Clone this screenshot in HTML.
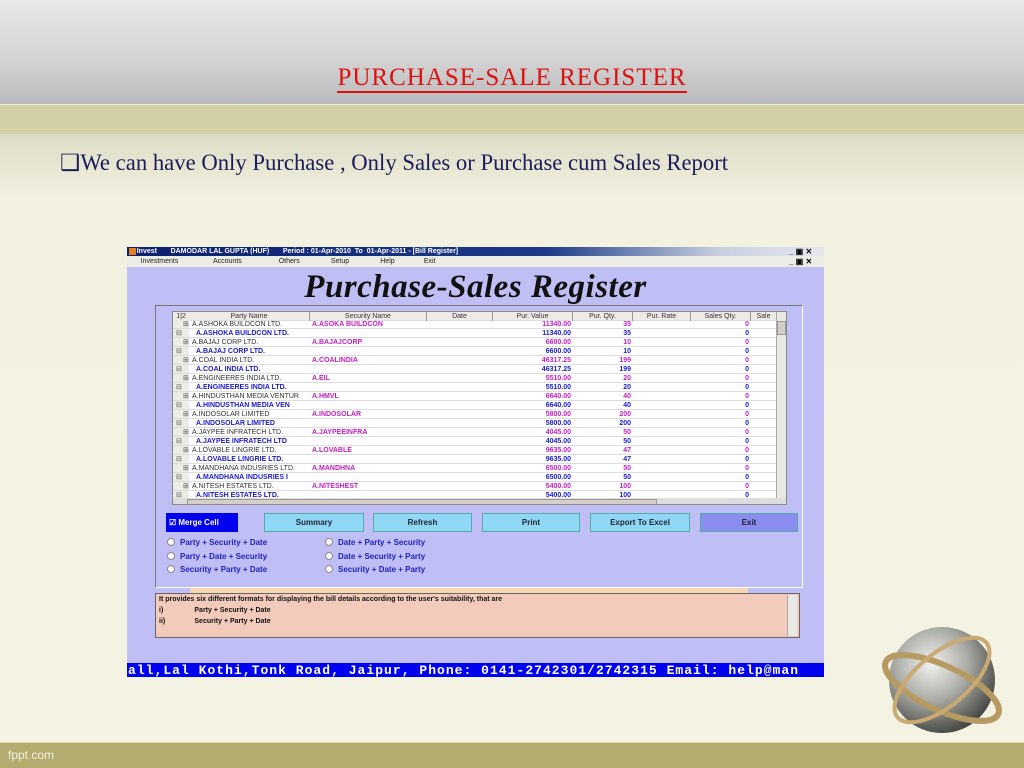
<!DOCTYPE html>
<html><head><meta charset="utf-8"><style>
*{margin:0;padding:0;box-sizing:border-box}
body{width:1024px;height:768px;position:relative;overflow:hidden;font-family:"Liberation Sans",sans-serif;background:linear-gradient(#dcdcc6 134px,#f3f1e0 200px,#f4f2e2 740px)}
.a{position:absolute}
.top{left:0;top:0;width:1024px;height:104px;background:linear-gradient(#e8e8e8,#d2d2d2 60%,#b9babc)}
.band{left:0;top:104px;width:1024px;height:30px;background:#d4d0a6;border-top:1px solid #eeeedd}
.bot{left:0;top:742px;width:1024px;height:26px;background:#b3ab6f;border-top:1px solid #ddd8b0}
h1{position:absolute;left:0;width:1024px;top:64px;text-align:center;font-family:"Liberation Serif",serif;font-size:25px;font-weight:normal;color:#e01010;letter-spacing:1px}
h1 span{border-bottom:2px solid #e01010}
.sub{left:60px;top:150px;font-family:"Liberation Serif",serif;font-size:22.7px;color:#1c1c5a;white-space:nowrap}
.win{left:127px;top:247px;width:697px;height:430px;background:#bfbff6}
.tb{left:0;top:0;width:697px;height:9px;background:linear-gradient(90deg,#0c2070,#1c3a88 60%,#c8cfe0 85%,#e6e6ee);color:#fff;font-size:7px;font-weight:bold;line-height:9px;white-space:pre}
.mb{left:0;top:9px;width:697px;height:11px;background:#ecebe6;font-size:7px;line-height:11px;color:#222;white-space:pre}
.ttl{left:0;width:697px;top:22px;text-align:center;font-family:"Liberation Serif",serif;font-style:italic;font-weight:bold;font-size:33px;color:#111;letter-spacing:0.5px}
.panel{left:28px;top:58px;width:648px;height:283px;border:1px solid #777;border-right-color:#fff;border-bottom-color:#fff}
.grid{left:45px;top:64px;width:615px;height:194px;background:#fff;border:1px solid #888;overflow:hidden}
.row{position:absolute;left:0;height:9px;width:603px;font-size:7px;line-height:9px;white-space:nowrap;border-bottom:1px solid #ddd}
.row div{position:absolute;top:0;overflow:hidden}
.hd{background:#ecebe6;color:#333;text-align:center}
.e{left:10px;color:#555}.c{left:3px;color:#555}
.p{left:19px;width:118px;color:#333}.s{left:139px;color:#c020c0;font-weight:bold}
.v{left:320px;width:78px;text-align:right;font-weight:bold}
.q{left:400px;width:58px;text-align:right;font-weight:bold}
.z{left:518px;width:58px;text-align:right;font-weight:bold}
.m .v,.m .q,.m .z{color:#c020c0}
.b .v,.b .q,.b .z{color:#1a1ac8}
.n{left:23px;width:114px;color:#1a1ac8;font-weight:bold}
.btn{position:absolute;top:266px;height:19px;background:#8ed8f6;border:1px solid #5aa;font-size:8px;font-weight:bold;color:#223;text-align:center;line-height:17px}
.rad{position:absolute;font-size:8px;color:#2020c0;font-weight:bold;white-space:nowrap}
.rad:before{content:"";display:inline-block;width:6px;height:6px;border-radius:50%;background:#fff;border:1px solid #888;margin-right:5px;vertical-align:-1px}
.note{left:28px;top:346px;width:645px;height:45px;background:#f2cbbd;border:1px solid #666;font-size:7px;font-weight:bold;color:#111;line-height:11px;padding-left:3px}
</style></head><body>
<div class="a top"></div><div class="a band"></div><div class="a bot"></div>
<h1><span>PURCHASE-SALE REGISTER</span></h1>
<div class="a sub">❑We can have Only Purchase , Only Sales or Purchase cum Sales Report</div>
<div class="a" style="left:8px;top:748px;color:#f4f2e0;font-size:12px">fppt.com</div>
<svg class="a" style="left:875px;top:620px" width="135" height="130" viewBox="0 0 135 130">
<defs><radialGradient id="g" cx="0.4" cy="0.35" r="0.7"><stop offset="0" stop-color="#f2f2f0"/><stop offset="0.5" stop-color="#a9a9a4"/><stop offset="1" stop-color="#3e3f3a"/></radialGradient></defs>
<circle cx="67" cy="60" r="53" fill="url(#g)"/>
<ellipse cx="67" cy="68" rx="62" ry="22" fill="none" stroke="#b59a62" stroke-width="6" transform="rotate(25 67 68)"/>
<ellipse cx="67" cy="60" rx="58" ry="26" fill="none" stroke="#c8aa72" stroke-width="4" transform="rotate(-40 67 60)"/>
</svg>
<div class="a win">
<div class="a tb">     Invest       DAMODAR LAL GUPTA (HUF)       Period : 01-Apr-2010  To  01-Apr-2011 - [Bill Register]</div>
<div class="a" style="left:2px;top:1px;width:7px;height:7px;background:#e08020"></div>
<div class="a mb">       Investments                  Accounts                   Others                Setup                Help               Exit</div>
<div class="a" style="left:662px;top:0;font-size:8px;color:#000;font-weight:bold">_ ▣ ✕</div>
<div class="a" style="left:662px;top:10px;font-size:8px;color:#000;font-weight:bold">_ ▣ ✕</div>
<div class="a ttl">Purchase-Sales Register</div>
<div class="a panel"></div>
<div class="a grid">
<div class="row hd" style="top:0">
<div style="left:0;width:16px">1|2</div><div style="left:16px;width:121px;border-right:1px solid #999">Party Name</div><div style="left:137px;width:117px;border-right:1px solid #999">Security Name</div><div style="left:254px;width:66px;border-right:1px solid #999">Date</div><div style="left:320px;width:80px;border-right:1px solid #999">Pur. Value</div><div style="left:400px;width:60px;border-right:1px solid #999">Pur. Qty.</div><div style="left:460px;width:58px;border-right:1px solid #999">Pur. Rate</div><div style="left:518px;width:60px;border-right:1px solid #999">Sales Qty.</div><div style="left:578px;width:25px">Sale</div></div>
<div class="a" style="left:0;top:8px;width:16px;height:186px;background:#ecebe6"></div>
<div class="row m" style="top:8px"><div class="e">⊞</div><div class="p">A.ASHOKA BUILDCON LTD.</div><div class="s">A.ASOKA BUILDCON</div><div class="v">11340.00</div><div class="q">35</div><div class="z">0</div></div>
<div class="row b" style="top:17px"><div class="c">⊟</div><div class="n">A.ASHOKA BUILDCON LTD.</div><div class="v">11340.00</div><div class="q">35</div><div class="z">0</div></div>
<div class="row m" style="top:26px"><div class="e">⊞</div><div class="p">A.BAJAJ CORP LTD.</div><div class="s">A.BAJAJCORP</div><div class="v">6600.00</div><div class="q">10</div><div class="z">0</div></div>
<div class="row b" style="top:35px"><div class="c">⊟</div><div class="n">A.BAJAJ CORP LTD.</div><div class="v">6600.00</div><div class="q">10</div><div class="z">0</div></div>
<div class="row m" style="top:44px"><div class="e">⊞</div><div class="p">A.COAL INDIA LTD.</div><div class="s">A.COALINDIA</div><div class="v">46317.25</div><div class="q">199</div><div class="z">0</div></div>
<div class="row b" style="top:53px"><div class="c">⊟</div><div class="n">A.COAL INDIA LTD.</div><div class="v">46317.25</div><div class="q">199</div><div class="z">0</div></div>
<div class="row m" style="top:62px"><div class="e">⊞</div><div class="p">A.ENGINEERES INDIA LTD.</div><div class="s">A.EIL</div><div class="v">5510.00</div><div class="q">20</div><div class="z">0</div></div>
<div class="row b" style="top:71px"><div class="c">⊟</div><div class="n">A.ENGINEERES INDIA LTD.</div><div class="v">5510.00</div><div class="q">20</div><div class="z">0</div></div>
<div class="row m" style="top:80px"><div class="e">⊞</div><div class="p">A.HINDUSTHAN MEDIA VENTUR</div><div class="s">A.HMVL</div><div class="v">6640.00</div><div class="q">40</div><div class="z">0</div></div>
<div class="row b" style="top:89px"><div class="c">⊟</div><div class="n">A.HINDUSTHAN MEDIA VEN</div><div class="v">6640.00</div><div class="q">40</div><div class="z">0</div></div>
<div class="row m" style="top:98px"><div class="e">⊞</div><div class="p">A.INDOSOLAR LIMITED</div><div class="s">A.INDOSOLAR</div><div class="v">5800.00</div><div class="q">200</div><div class="z">0</div></div>
<div class="row b" style="top:107px"><div class="c">⊟</div><div class="n">A.INDOSOLAR LIMITED</div><div class="v">5800.00</div><div class="q">200</div><div class="z">0</div></div>
<div class="row m" style="top:116px"><div class="e">⊞</div><div class="p">A.JAYPEE INFRATECH LTD.</div><div class="s">A.JAYPEEINFRA</div><div class="v">4045.00</div><div class="q">50</div><div class="z">0</div></div>
<div class="row b" style="top:125px"><div class="c">⊟</div><div class="n">A.JAYPEE INFRATECH LTD</div><div class="v">4045.00</div><div class="q">50</div><div class="z">0</div></div>
<div class="row m" style="top:134px"><div class="e">⊞</div><div class="p">A.LOVABLE LINGRIE LTD.</div><div class="s">A.LOVABLE</div><div class="v">9635.00</div><div class="q">47</div><div class="z">0</div></div>
<div class="row b" style="top:143px"><div class="c">⊟</div><div class="n">A.LOVABLE LINGRIE LTD.</div><div class="v">9635.00</div><div class="q">47</div><div class="z">0</div></div>
<div class="row m" style="top:152px"><div class="e">⊞</div><div class="p">A.MANDHANA INDUSRIES LTD.</div><div class="s">A.MANDHNA</div><div class="v">6500.00</div><div class="q">50</div><div class="z">0</div></div>
<div class="row b" style="top:161px"><div class="c">⊟</div><div class="n">A.MANDHANA INDUSRIES I</div><div class="v">6500.00</div><div class="q">50</div><div class="z">0</div></div>
<div class="row m" style="top:170px"><div class="e">⊞</div><div class="p">A.NITESH ESTATES LTD.</div><div class="s">A.NITESHEST</div><div class="v">5400.00</div><div class="q">100</div><div class="z">0</div></div>
<div class="row b" style="top:179px"><div class="c">⊟</div><div class="n">A.NITESH ESTATES LTD.</div><div class="v">5400.00</div><div class="q">100</div><div class="z">0</div></div>
<div class="a" style="left:603px;top:0;width:11px;height:186px;background:#e8e8e4;border-left:1px solid #aaa"></div>
<div class="a" style="left:604px;top:9px;width:9px;height:14px;background:#d4d0c8;border:1px solid #999"></div>
<div class="a" style="left:0;top:186px;width:614px;height:8px;background:#ddd"></div>
<div class="a" style="left:14px;top:187px;width:470px;height:6px;background:#d4d0c8;border:1px solid #999"></div>
</div>
<div class="a" style="left:39px;top:266px;width:72px;height:19px;background:#0000ee;color:#fff;font-size:8px;font-weight:bold;line-height:19px;padding-left:3px">☑ Merge Cell</div>
<div class="btn" style="left:137px;width:100px">Summary</div>
<div class="btn" style="left:246px;width:99px">Refresh</div>
<div class="btn" style="left:355px;width:98px">Print</div>
<div class="btn" style="left:463px;width:100px">Export To Excel</div>
<div class="btn" style="left:573px;width:98px;background:#8a8cf0">Exit</div>
<div class="rad" style="left:40px;top:291px">Party + Security + Date</div>
<div class="rad" style="left:40px;top:305px">Party + Date + Security</div>
<div class="rad" style="left:40px;top:318px">Security + Party + Date</div>
<div class="rad" style="left:198px;top:291px">Date + Party + Security</div>
<div class="rad" style="left:198px;top:305px">Date + Security + Party</div>
<div class="rad" style="left:198px;top:318px">Security + Date + Party</div>
<div class="a" style="left:63px;top:341px;width:558px;height:5px;background:#f4d6b0"></div>
<div class="a note">It provides six different formats for displaying the bill details according to the user's suitability, that are<br>i)&nbsp;&nbsp;&nbsp;&nbsp;&nbsp;&nbsp;&nbsp;&nbsp;&nbsp;&nbsp;&nbsp;&nbsp;&nbsp;&nbsp;&nbsp;&nbsp;Party + Security + Date<br>ii)&nbsp;&nbsp;&nbsp;&nbsp;&nbsp;&nbsp;&nbsp;&nbsp;&nbsp;&nbsp;&nbsp;&nbsp;&nbsp;&nbsp;&nbsp;Security + Party +  Date</div>
<div class="a" style="left:660px;top:348px;width:10px;height:41px;background:#e8e8e4;border-left:1px solid #aaa"></div>
<svg class="a" style="left:0;top:416px" width="697" height="14"><rect width="697" height="14" fill="#0000f0"/><text x="1" y="11" fill="#fff" font-family="Liberation Mono, monospace" font-weight="bold" font-size="13" textLength="670" lengthAdjust="spacing">all,Lal Kothi,Tonk Road, Jaipur, Phone: 0141-2742301/2742315 Email: help@man</text></svg>
</div>
</body></html>
